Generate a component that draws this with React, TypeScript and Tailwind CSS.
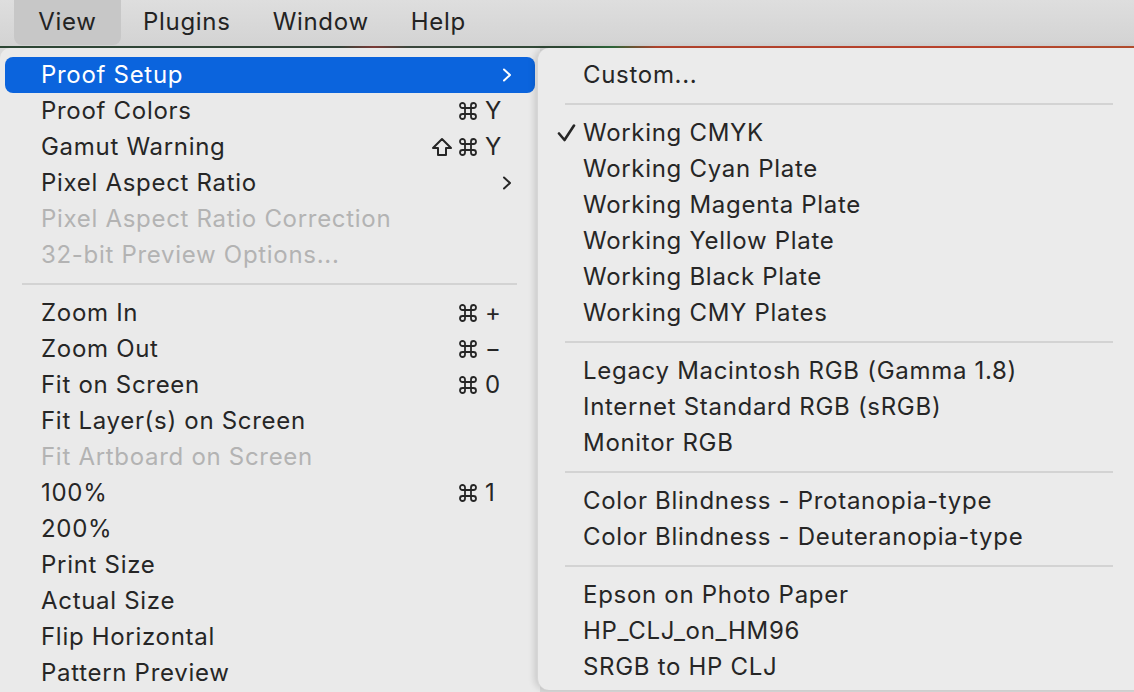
import React from 'react';

type Item =
  | { kind: 'sep' }
  | { kind: 'item'; label: string; shift?: boolean; keyChar?: string; sub?: boolean; disabled?: boolean; active?: boolean; checked?: boolean };

const mainItems: Item[] = [
  { kind: 'item', label: 'Proof Setup', sub: true, active: true },
  { kind: 'item', label: 'Proof Colors', keyChar: 'Y' },
  { kind: 'item', label: 'Gamut Warning', shift: true, keyChar: 'Y' },
  { kind: 'item', label: 'Pixel Aspect Ratio', sub: true },
  { kind: 'item', label: 'Pixel Aspect Ratio Correction', disabled: true },
  { kind: 'item', label: '32-bit Preview Options...', disabled: true },
  { kind: 'sep' },
  { kind: 'item', label: 'Zoom In', keyChar: '+' },
  { kind: 'item', label: 'Zoom Out', keyChar: '−' },
  { kind: 'item', label: 'Fit on Screen', keyChar: '0' },
  { kind: 'item', label: 'Fit Layer(s) on Screen' },
  { kind: 'item', label: 'Fit Artboard on Screen', disabled: true },
  { kind: 'item', label: '100%', keyChar: '1' },
  { kind: 'item', label: '200%' },
  { kind: 'item', label: 'Print Size' },
  { kind: 'item', label: 'Actual Size' },
  { kind: 'item', label: 'Flip Horizontal' },
  { kind: 'item', label: 'Pattern Preview' },
];

const subItems: Item[] = [
  { kind: 'item', label: 'Custom...' },
  { kind: 'sep' },
  { kind: 'item', label: 'Working CMYK', checked: true },
  { kind: 'item', label: 'Working Cyan Plate' },
  { kind: 'item', label: 'Working Magenta Plate' },
  { kind: 'item', label: 'Working Yellow Plate' },
  { kind: 'item', label: 'Working Black Plate' },
  { kind: 'item', label: 'Working CMY Plates' },
  { kind: 'sep' },
  { kind: 'item', label: 'Legacy Macintosh RGB (Gamma 1.8)' },
  { kind: 'item', label: 'Internet Standard RGB (sRGB)' },
  { kind: 'item', label: 'Monitor RGB' },
  { kind: 'sep' },
  { kind: 'item', label: 'Color Blindness - Protanopia-type' },
  { kind: 'item', label: 'Color Blindness - Deuteranopia-type' },
  { kind: 'sep' },
  { kind: 'item', label: 'Epson on Photo Paper' },
  { kind: 'item', label: 'HP_CLJ_on_HM96' },
  { kind: 'item', label: 'SRGB to HP CLJ' },
];

function Chevron({ white }: { white?: boolean }) {
  return (
    <svg width="12" height="16" viewBox="0 0 12 16" className="shrink-0">
      <path d="M3 2.5 L9 8 L3 13.5" fill="none" stroke={white ? '#ffffff' : '#262626'} strokeWidth="2" strokeLinecap="round" strokeLinejoin="round" />
    </svg>
  );
}

function Check() {
  return (
    <svg width="20" height="18" viewBox="0 0 20 18">
      <path d="M2 9.5 L7.5 16 L17 1.5" fill="none" stroke="#262626" strokeWidth="2.6" strokeLinecap="round" strokeLinejoin="round" />
    </svg>
  );
}

function Cmd() {
  return (
    <svg width="20" height="20" viewBox="0 0 20 20" className="shrink-0">
      <path
        d="M7 7 H13 V13 H7 Z M7 7 V4.5 A2.5 2.5 0 1 0 4.5 7 H7 M13 7 V4.5 A2.5 2.5 0 1 1 15.5 7 H13 M7 13 V15.5 A2.5 2.5 0 1 1 4.5 13 H7 M13 13 V15.5 A2.5 2.5 0 1 0 15.5 13 H13"
        fill="none"
        stroke="#262626"
        strokeWidth="1.8"
        strokeLinejoin="round"
      />
    </svg>
  );
}

function Shift() {
  return (
    <svg width="22" height="20" viewBox="0 0 22 20" className="shrink-0">
      <path d="M11 2 L20 11 H15 V18 H7 V11 H2 Z" fill="none" stroke="#262626" strokeWidth="2" strokeLinejoin="round" />
    </svg>
  );
}

function MainRow({ item }: { item: Extract<Item, { kind: 'item' }> }) {
  const color = item.active ? 'text-white' : item.disabled ? 'text-[#b3b3b3]' : 'text-[#262626]';
  return (
    <div className={`h-[36px] mx-[5px] rounded-[8px] flex items-center pl-[36px] pr-[22px] ${item.active ? 'bg-[#0b64dd]' : ''} ${color}`}>
      <span className="flex-1 whitespace-nowrap">{item.label}</span>
      {item.keyChar && (
        <span className="flex items-center mr-[9px]">
          {item.shift && <span className="mr-[5px] flex"><Shift /></span>}
          <Cmd />
          <span className="w-[19px] ml-[7px] text-left tracking-normal">{item.keyChar}</span>
        </span>
      )}
      {item.sub && <Chevron white={item.active} />}
    </div>
  );
}

export default function App() {
  return (
    <div className="w-[1134px] h-[692px] overflow-hidden bg-[#dadada] font-['Inter','Liberation_Sans',sans-serif] text-[24px] tracking-[0.7px] leading-none">
      {/* menu bar */}
      <div className="h-[46px] flex items-center bg-gradient-to-b from-[#dedede] to-[#d3d3d3] text-[#232323] pb-[2px]">
        <div className="ml-[14px] h-[46px] w-[107px] rounded-b-[8px] bg-[#c7c7c7] flex items-center justify-center">View</div>
        <div className="ml-[22px]">Plugins</div>
        <div className="ml-[42px]">Window</div>
        <div className="ml-[42px]">Help</div>
      </div>
      <div className="h-[2px] bg-[linear-gradient(90deg,#2c4634_0%,#34443a_30%,#7a3a36_33%,#3a463c_36%,#2f4a36_50%,#2f6a3c_54%,#b8452e_58%,#c2452e_85%,#b9502f_100%)]" />

      <div className="flex">
        {/* main menu */}
        <div className="w-[540px] shrink-0 h-[644px] bg-[#eaeaea] rounded-tl-[10px] pt-[9px]">
          {mainItems.map((it, i) =>
            it.kind === 'sep' ? (
              <div key={i} className="h-[22px] flex items-center pl-[22px] pr-[23px]">
                <div className="h-[2px] w-full bg-[#d3d3d3]" />
              </div>
            ) : (
              <MainRow key={i} item={it} />
            )
          )}
        </div>

        {/* submenu */}
        <div className="-ml-[3px] w-[604px] shrink-0 h-[642px] bg-[#ebebeb] rounded-l-[12px] pt-[9px] pb-[5px] shadow-[-3px_0_6px_rgba(0,0,0,0.13)] border-l border-[#d6d6d6] text-[#262626]">
          {subItems.map((it, i) =>
            it.kind === 'sep' ? (
              <div key={i} className="h-[22px] flex items-center pl-[27px] pr-[28px]">
                <div className="h-[2px] w-full bg-[#d3d3d3]" />
              </div>
            ) : (
              <div key={i} className="h-[36px] flex items-center pl-[19px]">
                <span className="w-[26px] flex items-center">{it.checked && <Check />}</span>
                <span className="whitespace-nowrap">{it.label}</span>
              </div>
            )
          )}
        </div>
      </div>
    </div>
  );
}
